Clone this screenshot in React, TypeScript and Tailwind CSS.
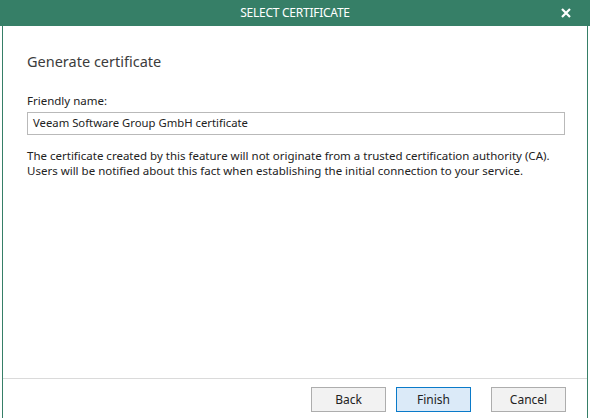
import React from "react";

export default function App() {
  const font = { fontFamily: '"Segoe UI", "Noto Sans", "Open Sans", sans-serif' };
  return (
    <div className="w-[590px] h-[418px] bg-white flex flex-col overflow-hidden" style={font}>
      <div className="h-[26px] bg-[#367f67] flex items-center relative shrink-0">
        <div className="flex-1 text-center text-white text-[12px] tracking-[-0.25px]">SELECT CERTIFICATE</div>
        <svg className="absolute left-[561px] top-[8px]" width="10" height="10" viewBox="0 0 10 10">
          <path d="M1 1 L9 9 M9 1 L1 9" stroke="white" strokeWidth="2.2" />
        </svg>
      </div>
      <div className="flex-1 flex px-[2px]">
        <div className="flex-1 flex flex-col border-x border-[#367f67]">
          <div className="flex-1 flex flex-col pl-[24px] pr-[22px] pt-[25px]">
            <div className="text-[14.5px] leading-[20px] text-[#3c3c3c]">Generate certificate</div>
            <div className="mt-[22px] text-[11.5px] leading-[16px] text-[#222]">Friendly name:</div>
            <div className="mt-[3px] h-[23px] border border-[#b9b9b9] flex items-center pl-[5px] text-[11.3px] text-[#222]">
              Veeam Software Group GmbH certificate
            </div>
            <div className="mt-[13px] text-[11.5px] leading-[15px] text-[#222] whitespace-nowrap">
              <div>The certificate created by this feature will not originate from a trusted certification authority (CA).</div>
              <div>Users will be notified about this fact when establishing the initial connection to your service.</div>
            </div>
          </div>
          <div className="h-[40px] border-t border-[#dadada] flex items-start justify-end pt-[8px] pr-[21px] shrink-0">
            <button className="w-[75px] h-[25px] border border-[#adadad] bg-[#f2f2f2] text-[12px] text-[#222]">Back</button>
            <button className="ml-[10px] w-[75px] h-[25px] border border-[#0a7ac9] bg-[#dbeaf8] text-[12px] text-[#222]">Finish</button>
            <button className="ml-[20px] w-[75px] h-[25px] border border-[#adadad] bg-[#f2f2f2] text-[12px] text-[#222]">Cancel</button>
          </div>
        </div>
      </div>
    </div>
  );
}
